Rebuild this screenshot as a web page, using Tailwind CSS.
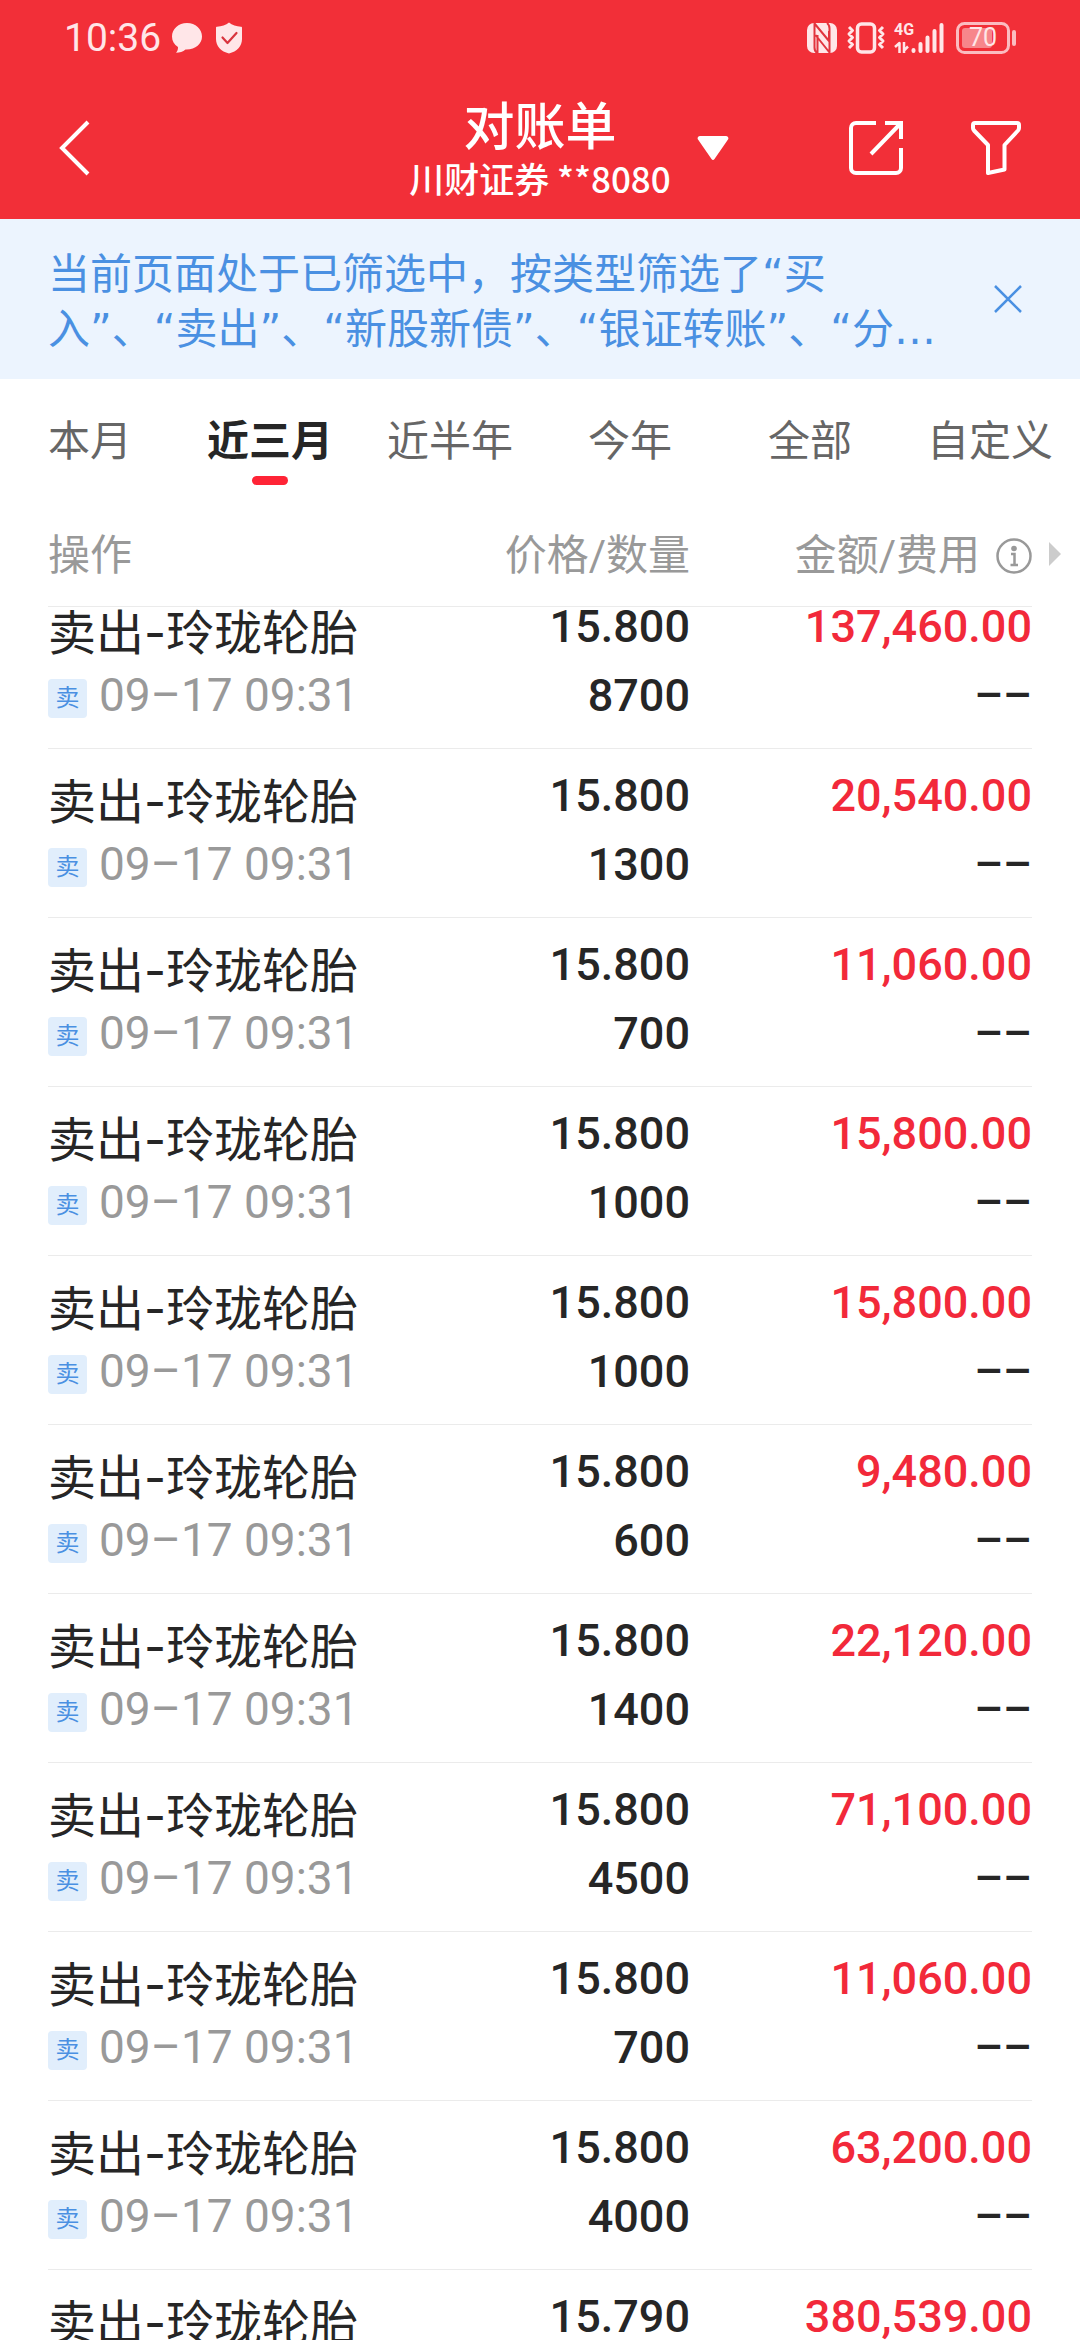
<!DOCTYPE html>
<html lang="zh-CN">
<head>
    <meta charset="UTF-8">
    <meta name="viewport" content="width=device-width, initial-scale=1.0">
    <title>对账单</title>
    <script src="https://cdn.jsdelivr.net/npm/@tailwindcss/browser@4"></script>
</head>
<body class="flex h-screen flex-col overflow-hidden bg-white font-['Roboto','Noto_Sans_CJK_SC',sans-serif] text-[#262626]">

    <header class="shrink-0 bg-[#f22f38] text-white">
        <!-- Status bar -->
        <div class="flex h-[76px] items-center justify-between pr-16 pl-16 text-[#ffe6e8]">
            <div class="flex items-center">
                <span class="text-[39px] leading-[48px]">10:36</span>
                <svg class="ml-2.5 h-8 w-8" viewBox="0 0 32 32" fill="currentColor">
                    <path d="M16 1C7.500 1 1 7 1 14.500c0 4.500 2.200 8 6 10.500 0 2.500-.5 4-2 5.800 3.500 0 7-1.200 9.500-3.300C24 28 31 22 31 14.500 31 7 24.500 1 16 1z"/>
                </svg>
                <svg class="ml-3 h-8 w-7" viewBox="0 0 28 32">
                    <path fill="currentColor" d="M14 0.500c3 2.500 7.500 4 12 4.300.6 0 1 .4 1 1V17c0 7-5 12.500-13 14.500C6 29.500 1 24 1 17V5.800c0-.6.4-1 1-1C6.500 4.500 11 3 14 .5z"/>
                    <path fill="none" stroke="#d9343e" stroke-width="2.200" stroke-linecap="round" stroke-linejoin="round" d="M7.500 15.500l5 5.500 9-10"/>
                </svg>
            </div>
            <div class="flex items-center">
                <!-- NFC -->
                <svg class="h-8 w-8" viewBox="0 0 32 32">
                    <rect x="1" y="1" width="30" height="30" rx="7" fill="currentColor"/>
                    <path fill="none" stroke="#e2343e" stroke-width="2" stroke-linejoin="round" d="M11 31c-2-1.500-2.500-3-2.500-5.500V1.500L23 19V9M21 1c2 1.500 2.500 3 2.500 5.500v24L9.500 13M11.500 31V13"/>
                </svg>
                <!-- Vibrate -->
                <svg class="ml-2 h-8 w-10" viewBox="0 0 40 32" fill="none" stroke="currentColor">
                    <rect x="11.500" y="2" width="17" height="28" rx="4" stroke-width="3.500"/>
                    <path stroke-width="3" stroke-linejoin="round" d="M3 5l3.500 3.500L3 12l3.500 3.500L3 19l3.500 3.500L3 26M37 5l-3.500 3.500L37 12l-3.500 3.500L37 19l-3.500 3.500L37 26"/>
                </svg>
                <!-- Mobile signal -->
                <div class="relative ml-2 h-8 w-[54px]">
                    <span class="absolute top-0 left-0 font-['Roboto'] text-[16px] leading-4 font-bold">4G</span>
                    <svg class="h-8 w-[54px]" viewBox="0 0 54 32" fill="none" stroke="currentColor">
                        <path stroke-width="2.500" stroke-linejoin="round" d="M1 25l4.500-4V31M10 20v11M10 28.500l4-4"/>
                        <path stroke-width="4" stroke-linecap="round" d="M19.500 28v1M26.500 22v7M33.500 15.500V29M40.500 9v20M47.500 3v26"/>
                    </svg>
                </div>
                <!-- Battery -->
                <div class="relative ml-2 h-8 w-[60px]">
                    <svg class="h-8 w-[60px]" viewBox="0 0 60 32">
                        <rect x="1.500" y="1.500" width="51" height="29" rx="7" fill="none" stroke="#fbbcc0" stroke-width="3"/>
                        <rect x="6" y="6" width="30" height="20" rx="3" fill="#f7868b"/>
                        <rect x="56" y="8" width="4" height="16" rx="2" fill="#fbbcc0"/>
                    </svg>
                    <span class="absolute inset-y-0 left-0 w-[54px] text-center text-[25px] leading-8">70</span>
                </div>
            </div>
        </div>

        <!-- Navigation bar -->
        <nav class="grid h-[143px] grid-cols-[1fr_auto_1fr] items-center px-[59px]">
            <button type="button" aria-label="返回" class="justify-self-start">
                <svg class="h-14 w-8" viewBox="0 0 32 56" fill="none" stroke="currentColor" stroke-width="4">
                    <path d="M29 2L3 28l26 26"/>
                </svg>
            </button>
            <button type="button" class="relative flex flex-col items-center">
                <span class="font-['Noto_Sans_CJK_SC',sans-serif] text-[51px] leading-[60px] font-medium">对账单</span>
                <span class="font-['Noto_Sans_CJK_SC',sans-serif] text-[35px] leading-[50px] font-medium">川财证券 **8080</span>
                <svg class="absolute top-1/2 left-full ml-[26px] h-6 w-8 -translate-y-1/2" viewBox="0 0 32 24" fill="currentColor">
                    <path d="M3 0h26c2 0 3 2 2 3.500L17.500 23c-.8 1.200-2.200 1.200-3 0L1 3.500C0 2 1 0 3 0z"/>
                </svg>
            </button>
            <div class="flex items-center justify-self-end">
                <button type="button" aria-label="导出">
                    <svg class="h-14 w-14" viewBox="0 0 56 56" fill="none" stroke="currentColor" stroke-width="4">
                        <path d="M28 3H8a5 5 0 0 0-5 5v40a5 5 0 0 0 5 5h40a5 5 0 0 0 5-5V28M37 3h16v16M53 3L23 34"/>
                    </svg>
                </button>
                <button type="button" aria-label="筛选" class="ml-[67px]">
                    <svg class="h-14 w-[50px]" viewBox="0 0 50 56" fill="none" stroke="currentColor" stroke-width="4" stroke-linejoin="round">
                        <path d="M4 3h42c1.500 0 2 1 2 2v3c0 1-.4 1.800-1 2.500L33.500 25v24.500L17 53V25L3 10.500C2.400 9.800 2 9 2 8V5c0-1 .5-2 2-2z"/>
                    </svg>
                </button>
            </div>
        </nav>
    </header>

    <!-- Filter notice -->
    <section class="flex min-h-[160px] shrink-0 items-center justify-between bg-[#ecf4fe] pr-14 pl-12 text-[#4a90e2]">
        <p class="pt-1.5 font-['DejaVu_Sans','Noto_Sans_CJK_SC',sans-serif] text-[42px] leading-[55px]">当前页面处于已筛选中，按类型筛选了“买<br>入”、“卖出”、“新股新债”、“银证转账”、“分…</p>
        <button type="button" aria-label="关闭">
            <svg class="h-8 w-8" viewBox="0 0 32 32" fill="none" stroke="currentColor" stroke-width="2.500">
                <path d="M3 3l26 26M29 3L3 29"/>
            </svg>
        </button>
    </section>

    <!-- Date range tabs -->
    <div role="tablist" class="grid h-[122px] shrink-0 grid-cols-6 text-[42px] leading-[60px] whitespace-nowrap text-[#666]">
        <button type="button" role="tab" class="pt-1">本月</button>
        <button type="button" role="tab" aria-selected="true" class="relative pt-1 font-bold text-[#262626]">
            近三月
            <span class="absolute bottom-4 left-1/2 h-[9px] w-9 -translate-x-1/2 rounded-full bg-[#ff2436]"></span>
        </button>
        <button type="button" role="tab" class="pt-1">近半年</button>
        <button type="button" role="tab" class="pt-1">今年</button>
        <button type="button" role="tab" class="pt-1">全部</button>
        <button type="button" role="tab" class="pt-1">自定义</button>
    </div>

    <!-- Records, the first one partly under the sticky head -->
    <div class="min-h-0 flex-1 overflow-y-auto px-12 [scrollbar-width:none]">
        <table class="-mt-[27px] w-full table-fixed border-separate border-spacing-0">
            <thead class="sticky top-0 z-10 bg-white">
                <tr class="h-[106px] text-[42px] leading-[60px] text-[#999]">
                    <th class="w-[38%] border-b border-[#ebebeb] p-0 pt-1 text-left font-normal">操作</th>
                    <th class="border-b border-[#ebebeb] p-0 pt-1 text-right font-normal">价格/数量</th>
                    <th class="relative w-[342px] border-b border-[#ebebeb] p-0 pt-1 font-normal">
                        <div class="flex items-center justify-end gap-4 whitespace-nowrap">
                            金额/费用
                            <svg class="h-9 w-9" viewBox="0 0 36 36" fill="none" stroke="currentColor">
                                <circle cx="18" cy="18" r="16.500" stroke-width="2.500"/>
                                <circle cx="18" cy="10.500" r="2.800" fill="currentColor" stroke="none"/>
                                <path stroke-width="2.500" d="M15 16h3.500v11M14.500 27h7.500"/>
                            </svg>
                        </div>
                        <svg class="absolute top-1/2 left-full ml-[17px] h-6 w-3 -translate-y-1/2" viewBox="0 0 12 24" fill="#ccc">
                            <path d="M0 0l12 12L0 24z"/>
                        </svg>
                    </th>
                </tr>
            </thead>
            <tbody id="records"></tbody>
        </table>
    </div>

    <script>
        const records = [
            { price: '15.800', count: '8700', amount: '137,460.00' },
            { price: '15.800', count: '1300', amount: '20,540.00' },
            { price: '15.800', count: '700', amount: '11,060.00' },
            { price: '15.800', count: '1000', amount: '15,800.00' },
            { price: '15.800', count: '1000', amount: '15,800.00' },
            { price: '15.800', count: '600', amount: '9,480.00' },
            { price: '15.800', count: '1400', amount: '22,120.00' },
            { price: '15.800', count: '4500', amount: '71,100.00' },
            { price: '15.800', count: '700', amount: '11,060.00' },
            { price: '15.800', count: '4000', amount: '63,200.00' },
            { price: '15.790', count: '24100', amount: '380,539.00' }
        ];

        document.getElementById('records').innerHTML = records.map(r => `
            <tr class="text-[45px] leading-[69px] font-medium">
                <td class="border-b border-[#ebebeb] pt-5 pb-[18px] align-top font-normal whitespace-nowrap">
                    <div class="h-[65px] font-['Inter','Noto_Sans_CJK_SC',sans-serif] text-[48px] leading-[65px]">卖出-玲珑轮胎</div>
                    <div class="flex h-[61px] items-center">
                        <span class="mt-1.5 h-[39px] w-[39px] rounded-sm bg-[#e1eefc] text-center text-[24px] leading-[38px] text-[#4a90e2]">卖</span>
                        <span class="ml-3 text-[46px] leading-[61px] text-[#999]">09–17 09:31</span>
                    </div>
                </td>
                <td class="border-b border-[#ebebeb] pt-3 pb-[18px] text-right align-top">
                    <div>${r.price}</div>
                    <div>${r.count}</div>
                </td>
                <td class="border-b border-[#ebebeb] pt-3 pb-[18px] text-right align-top">
                    <div class="text-[#f2293a]">${r.amount}</div>
                    <div>––</div>
                </td>
            </tr>
        `).join('');
    </script>
</body>
</html>
